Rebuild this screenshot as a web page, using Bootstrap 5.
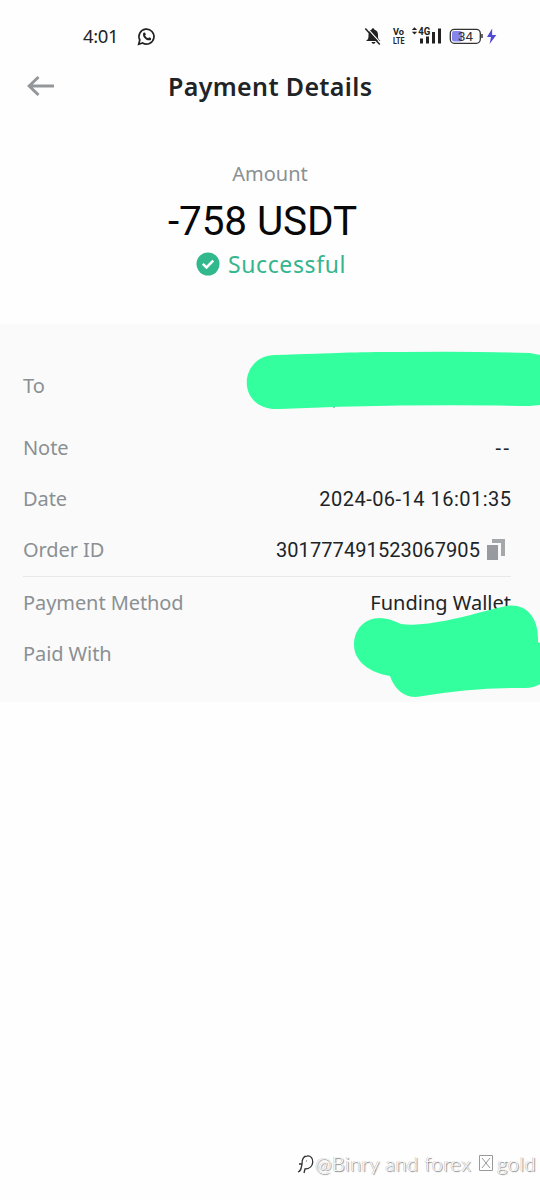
<!DOCTYPE html>
<html lang="en">
<head>
<meta charset="utf-8">
<meta name="viewport" content="width=device-width, initial-scale=1">
<title>Payment Details</title>
<link href="https://cdn.jsdelivr.net/npm/bootstrap@5.3.0/dist/css/bootstrap.min.css" rel="stylesheet">
<style>
  body { font-family: "Noto Sans", sans-serif; background: #fefefe; color: #202427; }
  .screen { height: 1200px; overflow: hidden; line-height: 1; }
  .status-bar { height: 60px; padding: 24px 43px 0 83px; }
  .clock { font: 18.5px/24px "Noto Sans", sans-serif; width: 54px; letter-spacing: -.4px; }
  .title-bar { height: 54px; padding-left: 26px; }
  .title-bar h1 { font-size: 25px; font-weight: 600; line-height: 34px; margin: -2px 0 0 113px; letter-spacing: .35px; }
  .summary { height: 210px; padding-top: 46px; }
  .caption { font-size: 20px; line-height: 28px; color: #8a9093; }
  .total { font: 40.5px/50px Roboto, sans-serif; color: #080808; margin: 8px 15px 0 0; letter-spacing: -.1px; }
  .state { color: #35b58d; font-size: 23px; line-height: 30px; margin: 3px 0 0 2px; letter-spacing: .6px; }
  .details { background: #fafafa; height: 378px; padding: 39px 29px 0 23px; }
  .detail-row { font-size: 20px; height: 46px; margin-bottom: 5px; }
  .detail-row dt { font-weight: 400; color: #8a9093; letter-spacing: -.08px; }
  .detail-row dd { margin: 0; }
  .recipient { margin-bottom: 16px; }
  .dashes { letter-spacing: 1.5px; }
  .digits { font-family: Roboto, sans-serif; letter-spacing: .48px; margin-right: -.45px !important; }
  .order-no { letter-spacing: .1px; margin-right: 0 !important; }
  .copy-icon { margin: 0 5px 0 6px; }
  .rule { border-top: 1px solid #e7e8e9; margin: -2px 0 3px; }
  .marker { left: 0; top: 0; pointer-events: none; }
  .watermark { right: 4px; top: 1149px; font: 300 20px/28px Lato, "Noto Sans", sans-serif; color: #fff; text-shadow: 1px 1px 1px #777, -.5px -.5px 0 #bbb; letter-spacing: .55px; }
</style>
</head>
<body>
<main class="screen position-relative">
  <div class="status-bar d-flex">
    <span class="clock">4:01</span>
    <svg width="19" height="24" viewBox="0 0 19 24" fill="none" stroke="#222" stroke-width="1.7"><path d="M1.7 20.2 2.8 16A7.5 7.5 0 1 1 5.6 19z"/><path d="M6.4 8.7 8 8.5l.9 2-.8 1c.8 1.5 1.6 2.2 3 2.8l1-1 2 1-.2 1.6c-3.8 2.1-9.5-3.3-7.5-7.2z" fill="#222" stroke="none"/></svg>
    <svg class="ms-auto" width="134" height="24" viewBox="363 24 134 24">
      <path d="M366 41c2.500-2 2.500-3 2.500-6 0-3 1-4.700 3-5.200.2-2.200 2.800-2.200 3 0 2.300.6 3.500 2.400 3.500 5.200 0 3 0 4 2.500 6zM371.500 42h4c-.5 2.400-3.500 2.400-4 0" fill="#222"/>
      <path d="m367 27.800 14 15.500" stroke="#fff" stroke-width="1.2"/><path d="m365.300 28.600 14.500 16" stroke="#222" stroke-width="1.5"/>
      <g font-family="Roboto, sans-serif" font-weight="700" fill="#222"><text x="393" y="34.8" font-size="8.5" textLength="11" lengthAdjust="spacingAndGlyphs">Vo</text><text x="393" y="44" font-size="8.5" textLength="11.5" lengthAdjust="spacingAndGlyphs">LTE</text><text x="418.3" y="35.2" font-size="10.5" textLength="12" lengthAdjust="spacingAndGlyphs">4G</text></g>
      <path d="m411.800 30 2.700-2.800 2.700 2.800zm0 1.800 2.700 2.800 2.700-2.800zM420 38.500h3v5h-3zM426 36.500h3v7h-3zM432 32h3v11.500h-3zM438 28.500h3v15h-3z" fill="#222"/>
      <rect x="450.3" y="29.3" width="30" height="14" rx="4" fill="#fff" stroke="#333" stroke-width="1.3"/>
      <rect x="452" y="31" width="10" height="10.5" rx="2" fill="#8585eb"/><path d="M482 34v4" stroke="#333" stroke-width="1.5"/>
      <text x="458" y="40.6" font-family="Roboto, sans-serif" font-size="12" textLength="15" lengthAdjust="spacingAndGlyphs" fill="#333">34</text>
      <path d="m492.200 28.500-5.200 8.500h4l-1.400 7 6.700-9h-4.200z" fill="#5149d5"/>
    </svg>
  </div>
  <header class="title-bar d-flex align-items-center">
    <svg width="29" height="24" viewBox="0 0 29 24" fill="none" stroke="#93979a" stroke-width="3"><path d="M28 11H3.500M12.500 2 3.200 11l9.300 9"/></svg>
    <h1>Payment Details</h1>
  </header>
  <section class="summary d-flex flex-column align-items-center">
    <div class="caption">Amount</div>
    <div class="total">-758 USDT</div>
    <div class="state d-flex align-items-center gap-2">
      <svg width="24" height="24" viewBox="0 0 24 24"><circle cx="12" cy="12" r="11.5" fill="#32b88d"/><path d="m6.800 11.800 3.700 3.600 6.700-6.700" fill="none" stroke="#fff" stroke-width="2.5"/></svg>
      <span>Successful</span>
    </div>
  </section>
  <dl class="details mb-0">
    <div class="detail-row recipient d-flex justify-content-between align-items-center"><dt>To</dt><dd></dd></div>
    <div class="detail-row d-flex justify-content-between align-items-center"><dt>Note</dt><dd class="dashes">--</dd></div>
    <div class="detail-row d-flex justify-content-between align-items-center"><dt>Date</dt><dd class="digits">2024-06-14 16:01:35</dd></div>
    <div class="detail-row d-flex justify-content-between align-items-center"><dt>Order ID</dt>
      <dd class="digits order-no d-flex align-items-center">301777491523067905
        <svg class="copy-icon" width="20" height="22" viewBox="0 0 20 22"><path d="M1 6h11v15H1z" fill="#979b9f"/><path d="M6 0h13v17h-4V4H6z" fill="#a5a8ab"/></svg></dd></div>
    <div class="rule"></div>
    <div class="detail-row d-flex justify-content-between align-items-center"><dt>Payment Method</dt><dd>Funding Wallet</dd></div>
    <div class="detail-row d-flex justify-content-between align-items-center"><dt>Paid With</dt><dd></dd></div>
  </dl>
  <svg class="marker position-absolute" width="540" height="720" fill="#33ff9f">
    <path d="M333 405h2v2.500h-2z" fill="#3a9a70"/>
    <path d="M275 355C340 353 350 352 400 352Q470 351 530 353L540 355V405L530 406Q480 405 400 405.500Q340 406 280 409C236 412 237 356 275 355"/>
    <path d="M380 618Q389 618 401 624C430 628 475 613 506 606C526 603 539 617 538 642L540 643V684Q534 688 525 688Q475 687 416 697C404 697 395 690 390 676C371 673 354 662 354 645C354 629 365 618 380 618"/>
  </svg>
  <div class="watermark position-absolute text-nowrap d-flex align-items-center">
    <svg width="18" height="22" viewBox="0 0 18 22" fill="none" stroke="#333" stroke-width="1.3"><path d="M1 20c3-1 3-3 4-8H2m3 0c0-6 2-8 5-8M10 4c8-1 8 13-2 13l-1 4M9 9h.5"/></svg>
    <span>@Binry and forex</span>
    <svg class="ms-2 me-1" width="14" height="16" viewBox="0 0 14 16" fill="none" stroke="#999"><path d="M.5.5h13v15H.5zM3 3l8 10M11 3 3 13"/></svg>
    <span>gold</span>
  </div>
</main>
<script src="https://cdn.jsdelivr.net/npm/bootstrap@5.3.0/dist/js/bootstrap.bundle.min.js"></script>
</body>
</html>
